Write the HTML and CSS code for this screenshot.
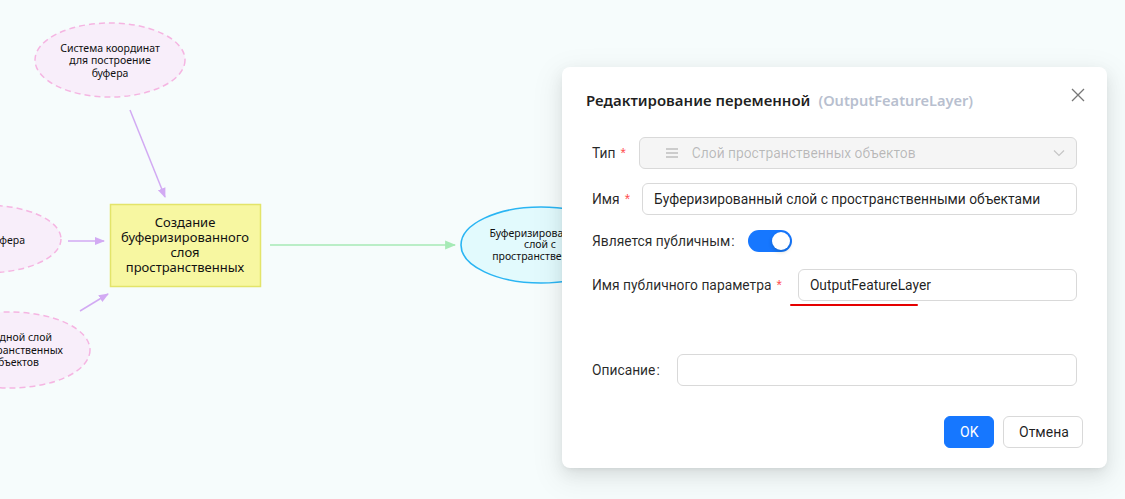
FILE: index.html
```html
<!DOCTYPE html>
<html lang="ru">
<head>
<meta charset="utf-8">
<title>Редактирование переменной</title>
<link rel="stylesheet" href="styles.css">
</head>
<body>
<div class="canvas">
  <svg class="diagram" width="1125" height="499" viewBox="0 0 1125 499">
    <defs>
      <marker id="ah-purple" viewBox="0 0 10 10" refX="9" refY="5" markerWidth="10" markerHeight="10" markerUnits="userSpaceOnUse" orient="auto">
        <path d="M0 1 L10 5 L0 9 Z" fill="#d2aaf3"/>
      </marker>
      <marker id="ah-green" viewBox="0 0 10 10" refX="9" refY="5" markerWidth="11" markerHeight="11" markerUnits="userSpaceOnUse" orient="auto">
        <path d="M0 1 L10 5 L0 9 Z" fill="#a6eab6"/>
      </marker>
    </defs>

    <!-- edges -->
    <line class="edge-purple" x1="130" y1="110" x2="165" y2="197" marker-end="url(#ah-purple)"/>
    <line class="edge-purple" x1="68" y1="241" x2="104" y2="241" marker-end="url(#ah-purple)"/>
    <line class="edge-purple" x1="80" y1="311" x2="108" y2="294" marker-end="url(#ah-purple)"/>
    <line class="edge-green" x1="270" y1="245" x2="455" y2="245" marker-end="url(#ah-green)"/>

    <!-- input nodes -->
    <ellipse class="node-input" cx="110" cy="60" rx="75" ry="37"/>
    <text class="node-text-sm" x="110" y="52" text-anchor="middle">Система координат</text>
    <text class="node-text-sm" x="110" y="64" text-anchor="middle">для построение</text>
    <text class="node-text-sm" x="110" y="77" text-anchor="middle">буфера</text>

    <ellipse class="node-input" cx="-15" cy="239" rx="76" ry="34"/>
    <text class="node-text-sm" x="25" y="244" text-anchor="end">Расстояние буфера</text>

    <ellipse class="node-input" cx="10" cy="350" rx="80" ry="38"/>
    <text class="node-text-sm" x="52" y="341" text-anchor="end">Входной слой</text>
    <text class="node-text-sm" x="63" y="354" text-anchor="end">пространственных</text>
    <text class="node-text-sm" x="39" y="366" text-anchor="end">объектов</text>

    <!-- tool -->
    <rect class="node-tool" x="110.5" y="204.5" width="150" height="82"/>
    <text class="node-text-md" x="185" y="227" text-anchor="middle">Создание</text>
    <text class="node-text-md" x="185" y="242" text-anchor="middle">буферизированного</text>
    <text class="node-text-md" x="185" y="257" text-anchor="middle">слоя</text>
    <text class="node-text-md" x="185" y="272" text-anchor="middle">пространственных</text>

    <!-- output -->
    <ellipse class="node-output" cx="541" cy="245" rx="80" ry="38"/>
    <text class="node-text-sm" x="540" y="237" text-anchor="middle">Буферизированный</text>
    <text class="node-text-sm" x="540" y="248" text-anchor="middle">слой с</text>
    <text class="node-text-sm" x="540" y="260" text-anchor="middle">пространственных</text>
  </svg>

  <div class="modal">
    <div class="modal-header">
      <span class="modal-title">Редактирование переменной</span>
      <span class="modal-subtitle">(OutputFeatureLayer)</span>
    </div>
    <button class="modal-close" aria-label="Закрыть">
      <svg width="14" height="14" viewBox="0 0 14 14"><path d="M1 1 L13 13 M13 1 L1 13" stroke="#777" stroke-width="1.3" fill="none"/></svg>
    </button>

    <form class="form">
      <div class="form-row row-type">
        <label class="label">Тип<span class="req">*</span></label>
        <div class="select">
          <span class="select-icon">
            <svg width="12" height="10" viewBox="0 0 12 10"><path d="M0 1 H12 M0 5 H12 M0 9 H12" stroke="#bfbfbf" stroke-width="1.6"/></svg>
          </span>
          <span class="select-value">Слой пространственных объектов</span>
          <span class="select-arrow">
            <svg width="12" height="8" viewBox="0 0 12 8"><path d="M1 1.5 L6 6.5 L11 1.5" stroke="#c4c4c4" stroke-width="1.1" fill="none"/></svg>
          </span>
        </div>
      </div>

      <div class="form-row row-name">
        <label class="label">Имя<span class="req">*</span></label>
        <div class="input">Буферизированный слой с пространственными объектами</div>
      </div>

      <div class="form-row row-public">
        <label class="label">Является публичным<span class="colon">:</span></label>
        <span class="switch"><span class="switch-knob"></span></span>
      </div>

      <div class="form-row row-param">
        <label class="label">Имя публичного параметра<span class="req">*</span></label>
        <div class="input">OutputFeatureLayer</div>
        <span class="annotation"></span>
      </div>

      <div class="form-row row-desc">
        <label class="label">Описание<span class="colon">:</span></label>
        <div class="input"></div>
      </div>
    </form>

    <div class="modal-footer">
      <button class="btn btn-primary">OK</button>
      <button class="btn btn-default">Отмена</button>
    </div>
  </div>
</div>
</body>
</html>
```

FILE: styles.css
```css
* { box-sizing: border-box; }

html, body {
  margin: 0;
  padding: 0;
}

body {
  background: #f6fcfc;
  font-family: "Noto Sans", "Open Sans", "Liberation Sans", sans-serif;
  color: rgba(0, 0, 0, 0.88);
  width: 1125px;
  height: 499px;
  overflow: hidden;
}

.canvas {
  position: relative;
  width: 1125px;
  height: 499px;
  overflow: hidden;
}

.diagram {
  display: block;
}

.edge-purple {
  stroke: #d2aaf3;
  stroke-width: 1.5;
}

.edge-green {
  stroke: #a6eab6;
  stroke-width: 1.5;
}

.node-input {
  fill: #f8eefa;
  stroke: #f5b5e2;
  stroke-width: 1.5;
  stroke-dasharray: 6 4;
}

.node-tool {
  fill: #f7f7a1;
  stroke: #e3e46a;
  stroke-width: 1.5;
}

.node-output {
  fill: #e2fafd;
  stroke: #2ab5f3;
  stroke-width: 1.6;
}

.node-text-sm {
  font-family: "Noto Sans", "Open Sans", sans-serif;
  font-size: 10.5px;
  fill: #111;
}

.node-text-md {
  font-family: "Noto Sans", "Open Sans", sans-serif;
  font-size: 13px;
  fill: #111;
}

/* modal */
.modal {
  position: absolute;
  left: 562px;
  top: 67px;
  width: 545px;
  height: 401px;
  background: #fff;
  border-radius: 8px;
  box-shadow: 0 6px 16px 0 rgba(0, 0, 0, 0.08),
              0 3px 6px -4px rgba(0, 0, 0, 0.12),
              0 9px 28px 8px rgba(0, 0, 0, 0.05);
  padding: 22px 24px 20px 24px;
  display: flex;
  flex-direction: column;
}

.modal-header {
  display: flex;
  align-items: center;
  gap: 8px;
  height: 22px;
  font-size: 15px;
  font-weight: 600;
}

.modal-title {
  color: rgba(0, 0, 0, 0.88);
}

.modal-subtitle {
  color: #b8bfcf;
  font-size: 14.6px;
}

.modal-close {
  position: absolute;
  top: 21px;
  right: 22px;
  width: 14px;
  height: 14px;
  padding: 0;
  border: 0;
  background: none;
  display: flex;
}

.form {
  margin: 26px 6px 0 6px;
  display: flex;
  flex-direction: column;
  font-family: Roboto, "Noto Sans", sans-serif;
}

.form-row {
  position: relative;
  display: flex;
  align-items: center;
  height: 32px;
  gap: 13px;
  font-size: 13.8px;
}

.row-type { margin-bottom: 14px; }
.row-name { margin-bottom: 10px; gap: 12px; }
.row-public { margin-bottom: 12px; }
.row-param { margin-bottom: 53px; gap: 16px; }
.row-desc { gap: 17px; }

.label {
  white-space: nowrap;
  color: rgba(0, 0, 0, 0.85);
}

.req {
  color: #ff4d4f;
  margin-left: 5px;
  font-family: "Liberation Sans", sans-serif;
}

.colon {
  margin-left: 1px;
}

.select,
.input {
  flex: 1;
  height: 32px;
  border: 1px solid #d9d9d9;
  border-radius: 6px;
  display: flex;
  align-items: center;
  padding: 0 11px;
  background: #fff;
  color: rgba(0, 0, 0, 0.88);
  white-space: nowrap;
  overflow: hidden;
}

.select {
  background: #f5f5f5;
  color: rgba(0, 0, 0, 0.25);
  padding-left: 26px;
}

.select-icon {
  display: flex;
  margin-right: 14px;
}

.select-value {
  flex: 1;
}

.select-arrow {
  display: flex;
}

.switch {
  position: relative;
  width: 44px;
  height: 22px;
  border-radius: 11px;
  background: #1677ff;
  flex: none;
}

.switch-knob {
  position: absolute;
  top: 2px;
  right: 2px;
  width: 18px;
  height: 18px;
  border-radius: 50%;
  background: #fff;
  box-shadow: 0 2px 4px rgba(0, 35, 11, 0.2);
}

.annotation {
  position: absolute;
  left: 198px;
  top: 35px;
  width: 128px;
  height: 2px;
  background: #e50000;
  border-radius: 1px;
}

.modal-footer {
  margin-top: auto;
  display: flex;
  justify-content: flex-end;
  gap: 9px;
}

.btn {
  height: 32px;
  border-radius: 6px;
  font-family: Roboto, "Noto Sans", sans-serif;
  font-size: 14px;
  padding: 0 15px;
  cursor: pointer;
}

.btn-primary {
  width: 50px;
  background: #1677ff;
  color: #fff;
  border: 1px solid #1677ff;
}

.btn-default {
  width: 80px;
  background: #fff;
  color: rgba(0, 0, 0, 0.88);
  border: 1px solid #d9d9d9;
}
```
